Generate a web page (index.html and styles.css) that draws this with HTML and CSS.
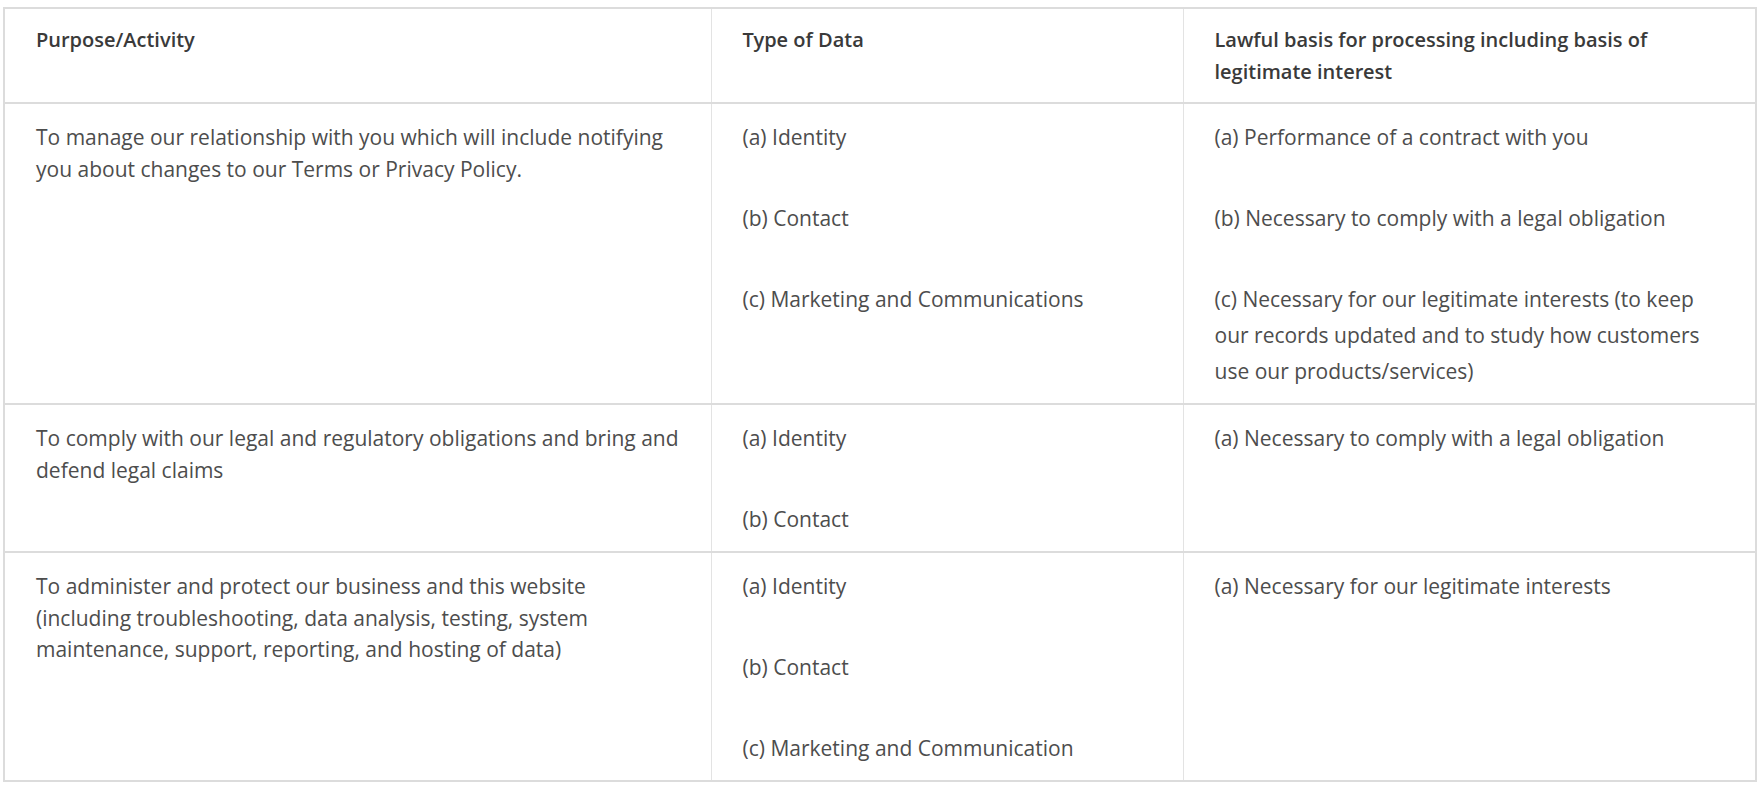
FILE: index.html
```html
<!DOCTYPE html>
<html lang="en">
<head>
<meta charset="utf-8">
<title>Purpose table</title>
<link rel="stylesheet" href="styles.css">
</head>
<body>
<div class="wrap">
<table class="legal">
  <colgroup>
    <col class="c1">
    <col class="c2">
    <col class="c3">
  </colgroup>
  <thead>
    <tr>
      <th>Purpose/Activity</th>
      <th>Type of Data</th>
      <th>Lawful basis for processing including basis of legitimate interest</th>
    </tr>
  </thead>
  <tbody>
    <tr>
      <td class="purpose">To manage our relationship with you which will include notifying you about changes to our Terms or Privacy Policy.</td>
      <td>
        <p>(a) Identity</p>
        <p>(b) Contact</p>
        <p>(c) Marketing and Communications</p>
      </td>
      <td>
        <p>(a) Performance of a contract with you</p>
        <p>(b) Necessary to comply with a legal obligation</p>
        <p>(c) Necessary for our legitimate interests (to keep our records updated and to study how customers use our products/services)</p>
      </td>
    </tr>
    <tr>
      <td class="purpose">To comply with our legal and regulatory obligations and bring and defend legal claims</td>
      <td>
        <p>(a) Identity</p>
        <p>(b) Contact</p>
      </td>
      <td>
        <p>(a) Necessary to comply with a legal obligation</p>
      </td>
    </tr>
    <tr>
      <td class="purpose">To administer and protect our business and this website (including troubleshooting, data analysis, testing, system maintenance, support, reporting, and hosting of data)</td>
      <td>
        <p>(a) Identity</p>
        <p>(b) Contact</p>
        <p>(c) Marketing and Communication</p>
      </td>
      <td>
        <p>(a) Necessary for our legitimate interests</p>
      </td>
    </tr>
  </tbody>
</table>
</div>
</body>
</html>
```

FILE: styles.css
```css
html, body {
  margin: 0;
  padding: 0;
  background: #ffffff;
}

.wrap {
  padding: 7px 7px 0 3px;
}

.legal {
  width: 100%;
  border-collapse: collapse;
  table-layout: fixed;
  border: 2px solid #dcdcdc;
  font-family: "Open Sans", "Noto Sans", sans-serif;
  font-size: 21px;
  line-height: 31.5px;
  color: #4d4d4d;
}

.c1 { width: 707px; }
.c2 { width: 472px; }
.c3 { width: auto; }

.legal th,
.legal td {
  text-align: left;
  vertical-align: top;
  padding: 15px 31px 14px 31px;
  border-left: 1px solid #e3e3e3;
  border-right: 1px solid #e3e3e3;
}

.legal td.purpose {
  padding-top: 18px;
}

.legal tr {
  border-bottom: 2px solid #dcdcdc;
}

.legal th {
  padding-bottom: 15px;
  font-family: "Open Sans SemiBold", "Open Sans", "Noto Sans", sans-serif;
  font-weight: 600;
  font-size: 20px;
  color: #3a3a3a;
}

.legal td p {
  margin: 0 0 45px 0;
  line-height: 36px;
}

.legal td p:last-child {
  margin-bottom: 0;
}
```
